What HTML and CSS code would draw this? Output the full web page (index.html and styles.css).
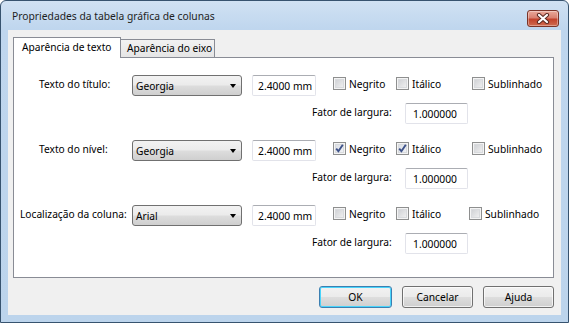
FILE: index.html
```html
<!DOCTYPE html>
<html lang="pt">
<head>
<meta charset="utf-8">
<title>Propriedades da tabela gráfica de colunas</title>
<link rel="stylesheet" href="styles.css">
</head>
<body>
<div class="window">
  <div class="titlebar">
    <span class="title">Propriedades da tabela gráfica de colunas</span>
    <button class="close" aria-label="Fechar">
      <svg width="14" height="11" viewBox="0 0 14 11">
        <path d="M3 2 L11 9 M11 2 L3 9" stroke="#5a2a22" stroke-width="4.2" stroke-linecap="round"/>
        <path d="M3 2 L11 9 M11 2 L3 9" stroke="#ffffff" stroke-width="2.2" stroke-linecap="round"/>
      </svg>
    </button>
  </div>
  <div class="client">
    <div class="tabs">
      <div class="tab active">Aparência de texto</div>
      <div class="tab">Aparência do eixo</div>
    </div>
    <div class="panel">
      <div class="group">
        <div class="row">
          <span class="label">Texto do título:</span>
          <div class="combo"><span>Georgia</span><i class="arrow"></i></div>
          <div class="edit size">2.4000 mm</div>
          <span class="check bold"><span class="box"></span>Negrito</span>
          <span class="check italic"><span class="box"></span>Itálico</span>
          <span class="check"><span class="box"></span>Sublinhado</span>
        </div>
        <div class="row fator">
          <span class="flabel">Fator de largura:</span>
          <div class="edit factor">1.000000</div>
        </div>
      </div>
      <div class="group">
        <div class="row">
          <span class="label">Texto do nível:</span>
          <div class="combo"><span>Georgia</span><i class="arrow"></i></div>
          <div class="edit size">2.4000 mm</div>
          <span class="check bold"><span class="box checked"><svg width="11" height="11" viewBox="0 0 11 11"><path d="M2.2 5.6 L4.4 8.2 L8.8 1.8" fill="none" stroke="#3e5289" stroke-width="1.9"/></svg></span>Negrito</span>
          <span class="check italic"><span class="box checked"><svg width="11" height="11" viewBox="0 0 11 11"><path d="M2.2 5.6 L4.4 8.2 L8.8 1.8" fill="none" stroke="#3e5289" stroke-width="1.9"/></svg></span>Itálico</span>
          <span class="check"><span class="box"></span>Sublinhado</span>
        </div>
        <div class="row fator">
          <span class="flabel">Fator de largura:</span>
          <div class="edit factor">1.000000</div>
        </div>
      </div>
      <div class="group">
        <div class="row">
          <span class="label long">Localização da coluna:</span>
          <div class="combo"><span>Arial</span><i class="arrow"></i></div>
          <div class="edit size">2.4000 mm</div>
          <span class="check bold"><span class="box"></span>Negrito</span>
          <span class="check italic narrow"><span class="box"></span>Itálico</span>
          <span class="check"><span class="box"></span>Sublinhado</span>
        </div>
        <div class="row fator">
          <span class="flabel">Fator de largura:</span>
          <div class="edit factor">1.000000</div>
        </div>
      </div>
    </div>
    <div class="buttons">
      <button class="btn default">OK</button>
      <button class="btn">Cancelar</button>
      <button class="btn">Ajuda</button>
    </div>
  </div>
</div>
</body>
</html>
```

FILE: styles.css
```css
html, body {
  margin: 0;
  padding: 0;
  background: #ffffff;
}
body {
  font-family: "Noto Sans", "Open Sans", "DejaVu Sans", sans-serif;
  font-size: 10.2px;
  color: #000;
  white-space: nowrap;
}
.window {
  width: 569px;
  height: 323px;
  box-sizing: border-box;
  border: 1px solid #37536f;
  border-radius: 6px 6px 0 0;
  background: linear-gradient(#d0e1f3, #bfd6ee 28px, #bcd4ec);
  padding: 0 7px 7px 7px;
  display: flex;
  flex-direction: column;
}
.titlebar {
  height: 29px;
  display: flex;
  align-items: flex-start;
  justify-content: space-between;
}
.title {
  margin: 8px 0 0 4px;
  font-size: 10.3px;
  color: #1e1e1e;
}
.close {
  margin: 9px 2px 0 0;
  width: 32px;
  height: 17px;
  padding: 0;
  border: 1px solid #7a3428;
  border-radius: 3px;
  background: linear-gradient(#e9a99a, #d98170 45%, #c2422b 55%, #cf6b4f);
  box-shadow: inset 0 0 0 1px rgba(255,255,255,0.35);
  display: flex;
  align-items: center;
  justify-content: center;
}
.client {
  flex: 1;
  background: #f0f0f0;
  padding: 7px 7px 7px 5px;
  display: flex;
  flex-direction: column;
}
.tabs {
  display: flex;
  align-items: flex-end;
  height: 20px;
}
.tab {
  box-sizing: border-box;
  width: 94px;
  border: 1px solid #898c95;
  border-bottom: none;
  border-left: none;
  height: 18px;
  padding: 0 0 0 6px;
  line-height: 17px;
  background: linear-gradient(#f2f2f2, #e5e5e5);
}
.tab.active {
  position: relative;
  z-index: 1;
  width: 108px;
  height: 21px;
  margin-bottom: -1px;
  background: #ffffff;
  border-left: 1px solid #898c95;
  padding: 0 0 0 8px;
  line-height: 19px;
}
.panel {
  height: 221px;
  box-sizing: border-box;
  border: 1px solid #898c95;
  background: #ffffff;
  padding-top: 17px;
  display: flex;
  flex-direction: column;
  gap: 16px;
}
.group {
  display: flex;
  flex-direction: column;
  gap: 7px;
}
.row {
  display: flex;
  align-items: center;
  height: 21px;
}
.label {
  box-sizing: border-box;
  width: 118px;
  padding-left: 25px;
  margin-top: -4px;
}
.label.long {
  padding-left: 6px;
}
.combo {
  box-sizing: border-box;
  width: 110px;
  height: 21px;
  border: 1px solid #707070;
  border-radius: 3px;
  background: linear-gradient(#f2f2f2, #ebebeb 48%, #dddddd 52%, #cfcfcf);
  display: flex;
  align-items: center;
  justify-content: space-between;
  padding: 0 5px 0 3px;
}
.combo span {
  margin-top: 1px;
}
.arrow {
  width: 0;
  height: 0;
  border-left: 3.5px solid transparent;
  border-right: 3.5px solid transparent;
  border-top: 4px solid #000;
}
.edit {
  box-sizing: border-box;
  height: 21px;
  border: 1px solid #e2e3ea;
  border-top-color: #abadb3;
  border-radius: 2px;
  background: #fff;
  display: flex;
  align-items: center;
  padding-left: 5px;
  font-size: 10.3px;
}
.edit.size {
  width: 64px;
  margin-left: 10px;
}
.check {
  display: flex;
  align-items: center;
  gap: 3px;
  margin-top: -4px;
}
.check.bold {
  margin-left: 17px;
  width: 63px;
}
.check.italic {
  width: 76px;
}
.check.italic.narrow {
  width: 73px;
}
.box {
  box-sizing: border-box;
  width: 13px;
  height: 13px;
  border: 1px solid #8e8f8f;
  background: linear-gradient(135deg, #c9cbcf, #f6f6f6);
  box-shadow: inset 0 0 0 1px #f4f4f4, inset 0 0 0 2px #d8dadd;
  display: flex;
  align-items: center;
  justify-content: center;
}
.box.checked {
  background: linear-gradient(135deg, #d5dae2, #f6f7f9);
}
.fator {
  padding-left: 298px;
}
.flabel {
  width: 93px;
  margin-top: -3px;
}
.edit.factor {
  width: 63px;
  padding-left: 7px;
}
.buttons {
  margin-top: 8px;
  display: flex;
  justify-content: flex-end;
  gap: 10px;
}
.btn {
  box-sizing: border-box;
  width: 71px;
  height: 22px;
  font-family: inherit;
  font-size: 10.3px;
  color: #000;
  border: 1px solid #707070;
  border-radius: 3px;
  background: linear-gradient(#f2f2f2, #ebebeb 48%, #dddddd 52%, #cfcfcf);
  box-shadow: inset 0 0 0 1px rgba(255,255,255,0.7);
  padding: 0 0 1px 0;
}
.btn.default {
  width: 73px;
  border-color: #3c7fb1;
  box-shadow: inset 0 0 0 1px #48d4fb;
}
```
